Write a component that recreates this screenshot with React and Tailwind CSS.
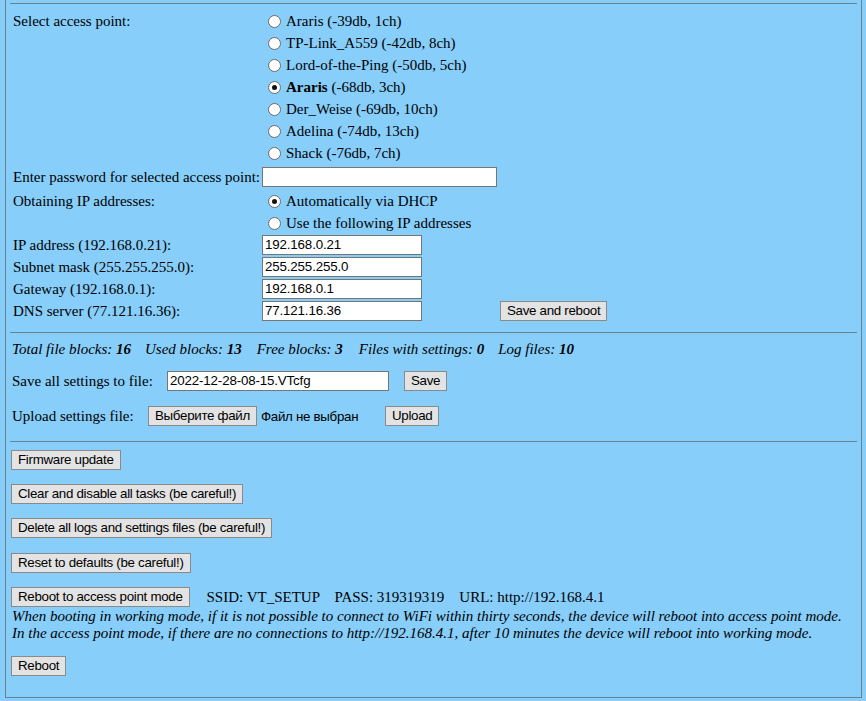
const serif = { fontFamily: '"Liberation Serif", "Times New Roman", serif' };

function Radio({ checked }) {
  return (
    <span className="ml-[7px] flex h-[13px] w-[13px] shrink-0 items-center justify-center rounded-full border border-[#6b6b6b] bg-white">
      {checked && <span className="h-[5px] w-[5px] rounded-full bg-[#111]" />}
    </span>
  );
}

function Btn({ children, className = "" }) {
  return (
    <button
      className={
        "flex h-[20px] shrink-0 items-center border border-[#8a8a8a] bg-[#e3e3e3] px-[6px] font-['Liberation_Sans',Arial,sans-serif] text-[13.33px] leading-none tracking-[-0.3px] text-black " +
        className
      }
    >
      {children}
    </button>
  );
}

function Field({ value = "", className = "" }) {
  return (
    <div
      className={
        "flex h-[20px] items-center border border-[#767676] bg-white px-[2px] font-['Liberation_Sans',Arial,sans-serif] text-[13.33px] leading-none tracking-[-0.15px] text-black " +
        className
      }
    >
      {value}
    </div>
  );
}

function Rule() {
  return <div className="h-px w-full bg-[#6a8192]" />;
}

const networks = [
  { name: "Araris", info: "(-39db, 1ch)" },
  { name: "TP-Link_A559", info: "(-42db, 8ch)" },
  { name: "Lord-of-the-Ping", info: "(-50db, 5ch)" },
  { name: "Araris", info: "(-68db, 3ch)", checked: true },
  { name: "Der_Weise", info: "(-69db, 10ch)" },
  { name: "Adelina", info: "(-74db, 13ch)" },
  { name: "Shack", info: "(-76db, 7ch)" },
];

const ipRows = [
  { label: "IP address (192.168.0.21):", value: "192.168.0.21" },
  { label: "Subnet mask (255.255.255.0):", value: "255.255.255.0" },
  { label: "Gateway (192.168.0.1):", value: "192.168.0.1" },
  { label: "DNS server (77.121.16.36):", value: "77.121.16.36", button: true },
];

export default function App() {
  return (
    <div className="h-[701px] w-full overflow-hidden bg-[#87cefa] text-[15px] leading-[17px] text-black" style={serif}>
      <div className="ml-[5px] h-[698px] w-[857px] border-x border-b border-[#6a8192] px-[4px] pt-[3px]">
        <Rule />

        {/* ACCESS POINTS */}
        <div className="mt-[6px] flex">
          <div className="w-[251px] pl-[3px] leading-[22px]">Select access point:</div>
          <div className="flex flex-col">
            {networks.map((n, i) => (
              <div key={i} className="flex h-[22px] items-center">
                <Radio checked={n.checked} />
                <span className="ml-[5px] whitespace-pre">
                  {n.checked ? <b>{n.name}</b> : n.name} {n.info}
                </span>
              </div>
            ))}
          </div>
        </div>

        <div className="flex h-[26px] items-center">
          <div className="w-[251px] pl-[3px]">Enter password for selected access point:</div>
          <Field className="ml-[1px] w-[235px]" />
        </div>

        <div className="flex">
          <div className="w-[251px] pl-[3px] leading-[22px]">Obtaining IP addresses:</div>
          <div className="flex flex-col">
            <div className="flex h-[22px] items-center">
              <Radio checked />
              <span className="ml-[5px]">Automatically via DHCP</span>
            </div>
            <div className="flex h-[22px] items-center">
              <Radio />
              <span className="ml-[5px]">Use the following IP addresses</span>
            </div>
          </div>
        </div>

        {ipRows.map((r) => (
          <div key={r.label} className="flex h-[22px] items-center">
            <div className="w-[251px] pl-[3px]">{r.label}</div>
            <Field className="ml-[1px] w-[160px]" value={r.value} />
            {r.button && <Btn className="ml-[78px]">Save and reboot</Btn>}
          </div>
        ))}

        <div className="mt-[10px]">
          <Rule />
        </div>

        {/* FILE STATS */}
        <div className="mt-[5px] flex h-[22px] items-center pl-[2px] italic">
          <span>Total file blocks: <b>16</b></span>
          <span className="ml-[14px]">Used blocks: <b>13</b></span>
          <span className="ml-[15px]">Free blocks: <b>3</b></span>
          <span className="ml-[16px]">Files with settings: <b>0</b></span>
          <span className="ml-[14px]">Log files: <b>10</b></span>
        </div>

        <div className="mt-[10px] flex h-[22px] items-center pl-[2px]">
          <span className="w-[155px]">Save all settings to file:</span>
          <Field className="w-[222px]" value="2022-12-28-08-15.VTcfg" />
          <Btn className="ml-[15px]">Save</Btn>
        </div>

        <div className="mt-[13px] flex h-[22px] items-center pl-[2px]">
          <span className="w-[136px]">Upload settings file:</span>
          <Btn>Выберите файл</Btn>
          <span className="ml-[4px] w-[124px] font-['Liberation_Sans',Arial,sans-serif] text-[13.33px] tracking-[-0.3px]">Файл не выбран</span>
          <Btn>Upload</Btn>
        </div>

        <div className="mt-[14px]">
          <Rule />
        </div>

        {/* ACTIONS */}
        <div className="flex flex-col items-start pl-[1px]">
          <Btn className="mt-[8px]">Firmware update</Btn>
          <Btn className="mt-[14px]">Clear and disable all tasks (be careful!)</Btn>
          <Btn className="mt-[14px]">Delete all logs and settings files (be careful!)</Btn>
          <Btn className="mt-[15px]">Reset to defaults (be careful!)</Btn>
          <div className="mt-[14px] flex items-center">
            <Btn>Reboot to access point mode</Btn>
            <span className="ml-[17px] whitespace-pre">SSID: VT_SETUP    PASS: 319319319    URL: http://192.168.4.1</span>
          </div>
        </div>
        <div className="mt-[1px] pl-[2px] italic">
          <p>When booting in working mode, if it is not possible to connect to WiFi within thirty seconds, the device will reboot into access point mode.</p>
          <p>In the access point mode, if there are no connections to http://192.168.4.1, after 10 minutes the device will reboot into working mode.</p>
        </div>
        <div className="pl-[1px]">
          <Btn className="mt-[14px]">Reboot</Btn>
        </div>
      </div>
    </div>
  );
}
